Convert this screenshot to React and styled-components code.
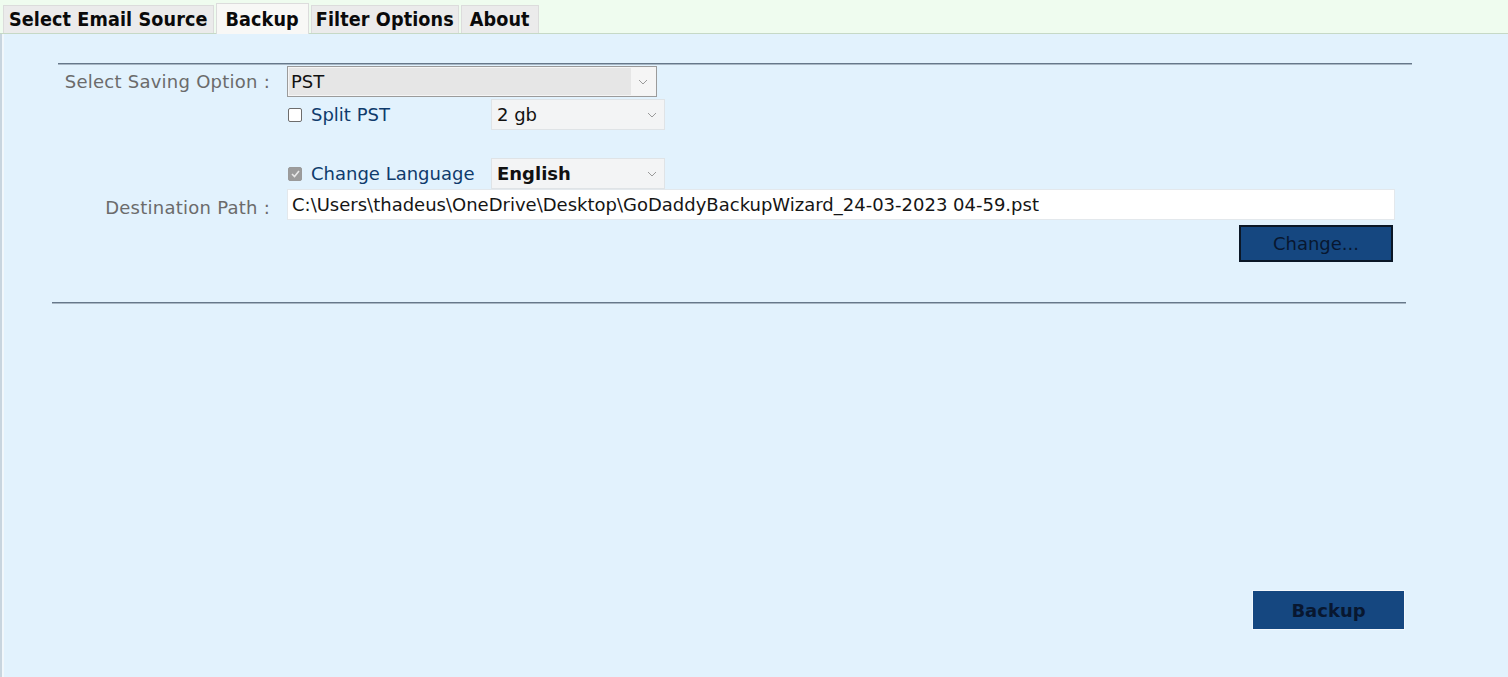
import React from 'react';
import styled, { createGlobalStyle } from 'styled-components';

const Global = createGlobalStyle`
  html, body { margin: 0; padding: 0; }
  body { font-family: "DejaVu Sans", sans-serif; }
`;

const Window = styled.div`
  width: 1508px;
  height: 677px;
  display: flex;
  flex-direction: column;
  overflow: hidden;
`;

const TabBar = styled.div`
  height: 33px;
  background: #effcef;
  border-bottom: 1px solid #c6d9c6;
  display: flex;
  align-items: flex-end;
  padding-left: 3px;
  gap: 2px;
`;

const Tab = styled.div`
  height: ${p => (p.$active ? '31px' : '28px')};
  box-sizing: border-box;
  padding: 0 ${p => p.$pad || 6}px;
  display: flex;
  align-items: center;
  background: ${p => (p.$active ? '#f8f8f6' : '#ebebeb')};
  border: 1px solid #dcdcdc;
  border-bottom: none;
  font-family: "DejaVu Sans Condensed", "DejaVu Sans", sans-serif;
  font-weight: bold;
  font-size: 19.6px;
  letter-spacing: 0.1px;
  color: #0a0a0a;
  margin-bottom: ${p => (p.$active ? '-1px' : '0')};
  position: relative;
`;

const Panel = styled.div`
  flex: 1;
  background: #e2f2fd;
  border-left: 2px solid #c8d5df;
  box-shadow: inset 2px 0 0 #f1f7fb;
  display: flex;
  flex-direction: column;
`;

const Rule = styled.div`
  height: 0;
  border-top: 1px solid #66788a;
  border-bottom: 1px solid #a8b7c4;
  width: ${p => p.$w}px;
  margin-left: ${p => p.$left}px;
  margin-top: ${p => p.$top}px;
`;

const Form = styled.div`
  display: grid;
  grid-template-columns: 268px 1108px;
  column-gap: 17px;
  align-items: center;
  margin-top: 1px;
`;

const Label = styled.div`
  text-align: right;
  color: #6b6b6b;
  font-size: 18px;
  letter-spacing: 0.25px;
  padding-top: ${p => p.$dy || 0}px;
`;

const Row = styled.div`
  display: flex;
  align-items: center;
  height: ${p => p.$h || 31}px;
  margin-top: ${p => p.$mt || 0}px;
`;

const CheckGroup = styled.label`
  width: 204px;
  display: flex;
  align-items: center;
  gap: 9px;
  color: #0f3b6c;
  font-size: 18px;
`;

const Box = styled.span`
  width: 14px;
  height: 14px;
  margin-left: 1px;
  border-radius: 2px;
  box-sizing: border-box;
  border: 1px solid ${p => (p.$checked ? '#9a9a9a' : '#6d6d6d')};
  background: ${p => (p.$checked ? '#9c9c9c' : '#ffffff')};
  display: flex;
  align-items: center;
  justify-content: center;
`;

const Select = styled.div`
  width: ${p => p.$w}px;
  height: ${p => p.$h || 31}px;
  box-sizing: border-box;
  display: flex;
  align-items: center;
  border: 1px solid ${p => (p.$strong ? '#9b9b9b' : '#dfe3e6')};
  background: ${p => (p.$strong ? '#f5f5f5' : '#f3f4f5')};
  padding: ${p => (p.$strong ? '1px' : '0')};
  font-size: 18px;
  color: #111;
  font-weight: ${p => (p.$bold ? 'bold' : 'normal')};
`;

const SelectValue = styled.div`
  flex: 1;
  height: 100%;
  display: flex;
  align-items: center;
  padding-left: ${p => (p.$strong ? 2 : 5)}px;
  background: ${p => (p.$strong ? '#e6e6e6' : 'transparent')};
`;

const Arrow = styled.div`
  width: 24px;
  display: flex;
  align-items: center;
  justify-content: center;
`;

const PathInput = styled.div`
  height: 31px;
  width: 1108px;
  box-sizing: border-box;
  background: #ffffff;
  border: 1px solid #e3e8ec;
  display: flex;
  align-items: center;
  padding-left: 4px;
  font-size: 18px;
  color: #151515;
`;

const ButtonRow = styled.div`
  display: flex;
  justify-content: flex-end;
  padding-right: ${p => p.$right}px;
  margin-top: ${p => p.$top}px;
`;

const Button = styled.button`
  width: ${p => p.$w}px;
  height: ${p => p.$h}px;
  background: #154780;
  border: ${p => (p.$bold ? 'none' : '2px solid #0b1726')};
  box-shadow: ${p => (p.$bold ? '0 0 0 1px #f2f8fd' : 'none')};
  color: #081730;
  font-family: "DejaVu Sans", sans-serif;
  font-size: 18px;
  font-weight: ${p => (p.$bold ? 'bold' : 'normal')};
  padding: 0;
`;

const Chevron = () => (
  <svg width="10" height="6" viewBox="0 0 10 6">
    <path d="M1 1 L5 5 L9 1" fill="none" stroke="#9a9a9a" strokeWidth="1" />
  </svg>
);

const Tick = () => (
  <svg width="9" height="8" viewBox="0 0 9 8">
    <path d="M1 4 L3.5 6.5 L8 1" fill="none" stroke="#e8e8e8" strokeWidth="1.6" />
  </svg>
);

export default function App() {
  return (
    <Window>
      <Global />
      <TabBar>
        <Tab $pad={5}>Select Email Source</Tab>
        <Tab $active $pad={9}>Backup</Tab>
        <Tab $pad={4}>Filter Options</Tab>
        <Tab $pad={8}>About</Tab>
      </TabBar>
      <Panel>
        <Rule $w={1354} $left={56} $top={29} />
        <Form>
          <Label>Select Saving Option :</Label>
          <Row>
            <Select $w={370} $strong>
              <SelectValue $strong>PST</SelectValue>
              <Arrow><Chevron /></Arrow>
            </Select>
          </Row>
          <div />
          <Row $mt={2}>
            <CheckGroup>
              <Box />
              Split PST
            </CheckGroup>
            <Select $w={174}>
              <SelectValue>2 gb</SelectValue>
              <Arrow><Chevron /></Arrow>
            </Select>
          </Row>
          <div />
          <Row $mt={28}>
            <CheckGroup>
              <Box $checked><Tick /></Box>
              Change Language
            </CheckGroup>
            <Select $w={174} $bold>
              <SelectValue>English</SelectValue>
              <Arrow><Chevron /></Arrow>
            </Select>
          </Row>
          <Label $dy={5}>Destination Path :</Label>
          <Row>
            <PathInput>C:\Users\thadeus\OneDrive\Desktop\GoDaddyBackupWizard_24-03-2023 04-59.pst</PathInput>
          </Row>
        </Form>
        <ButtonRow $right={115} $top={5}>
          <Button $w={154} $h={37}>Change...</Button>
        </ButtonRow>
        <Rule $w={1354} $left={50} $top={40} />
        <ButtonRow $right={104} $top={287}>
          <Button $w={151} $h={38} $bold>Backup</Button>
        </ButtonRow>
      </Panel>
    </Window>
  );
}
